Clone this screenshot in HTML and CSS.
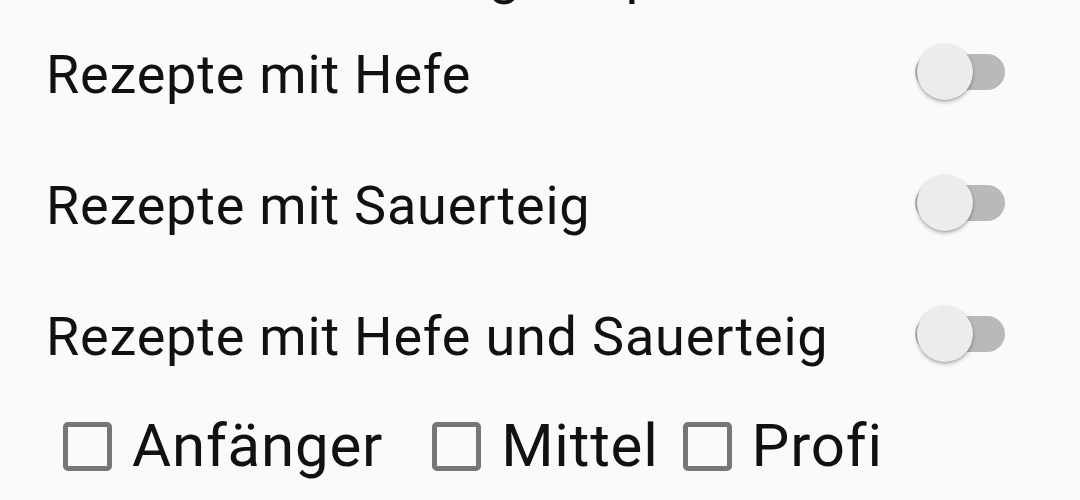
FILE: index.html
```html
<!DOCTYPE html>
<html lang="de">
<head>
<meta charset="utf-8">
<link rel="stylesheet" href="styles.css">
</head>
<body>
<div class="screen">
  <h2 class="heading">Teigrezepte</h2>
  <div class="row">
    <span class="label">Rezepte mit Hefe</span>
    <span class="switch"><span class="track"></span><span class="thumb"></span></span>
  </div>
  <div class="row">
    <span class="label">Rezepte mit Sauerteig</span>
    <span class="switch"><span class="track"></span><span class="thumb"></span></span>
  </div>
  <div class="row">
    <span class="label">Rezepte mit Hefe und Sauerteig</span>
    <span class="switch"><span class="track"></span><span class="thumb"></span></span>
  </div>
  <div class="checks">
    <label class="check c1"><span class="box"></span><span class="clabel">Anfänger</span></label>
    <label class="check c2"><span class="box"></span><span class="clabel">Mittel</span></label>
    <label class="check c3"><span class="box"></span><span class="clabel">Profi</span></label>
  </div>
</div>
</body>
</html>
```
FILE: styles.css
```css
html, body {
  margin: 0;
  padding: 0;
  background: #fafafa;
}
body {
  width: 1080px;
  height: 500px;
  overflow: hidden;
  font-family: Roboto, "Noto Sans", sans-serif;
  color: #111;
}
.screen {
  display: flex;
  flex-direction: column;
}
.heading {
  margin: -58px 0 0 0;
  height: 64px;
  font-size: 56px;
  font-weight: 400;
  line-height: 64px;
  text-align: center;
  padding-left: 40px;
}
.row {
  height: 131px;
  display: flex;
  align-items: center;
  justify-content: space-between;
  padding: 0 75px 0 46px;
}
.label {
  font-size: 54px;
  letter-spacing: 0.8px;
  line-height: 1;
  padding-top: 6px;
}
.switch {
  position: relative;
  width: 90px;
  height: 56px;
  display: block;
}
.track {
  position: absolute;
  left: 0;
  right: 0;
  top: 10px;
  height: 36px;
  border-radius: 18px;
  background: #b9b9b9;
}
.thumb {
  position: absolute;
  left: 2px;
  top: 0;
  width: 56px;
  height: 56px;
  border-radius: 50%;
  background: #ececec;
  box-shadow: 0 2px 4px rgba(0,0,0,0.28), 0 1px 2px rgba(0,0,0,0.12);
}
.checks {
  display: flex;
  align-items: center;
  padding: 0 0 0 63px;
  margin-top: -3px;
  height: 100px;
}
.check {
  display: flex;
  align-items: center;
  gap: 20px;
}
.c1 { margin-right: 49px; }
.c2 { margin-right: 24px; }
.box {
  width: 39px;
  height: 39px;
  border: 5px solid #767676;
  border-radius: 5px;
  display: block;
}
.clabel {
  font-size: 60px;
  letter-spacing: 0.8px;
  line-height: 1;
  color: #111;
}
```
